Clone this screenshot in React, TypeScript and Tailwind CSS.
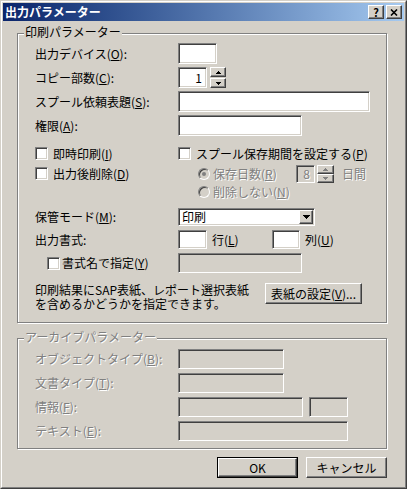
import type { ReactNode } from 'react';

const sunken =
  'border border-t-[#808080] border-l-[#808080] border-b-white border-r-white shadow-[inset_1px_1px_0_#404040,inset_-1px_-1px_0_#d4d0c8]';
const raised =
  'border border-t-white border-l-white border-b-[#404040] border-r-[#404040] shadow-[inset_-1px_-1px_0_#808080] bg-[#d4d0c8]';
const dim = 'text-[#808080] [text-shadow:1px_1px_0_#fff]';
const etched = 'border border-[#808080] shadow-[inset_1px_1px_0_#fff,1px_1px_0_#fff]';

function UpArrow({ color = '#000' }: { color?: string }) {
  return (
    <svg width="5" height="3" viewBox="0 0 5 3" shapeRendering="crispEdges">
      <path d="M2 0h1v1h1v1h1v1H0V2h1V1h1z" fill={color} />
    </svg>
  );
}

function DownArrow({ color = '#000', big = false }: { color?: string; big?: boolean }) {
  if (big) {
    return (
      <svg width="7" height="4" viewBox="0 0 7 4" shapeRendering="crispEdges">
        <path d="M0 0h7v1H6v1H5v1H4v1H3V3H2V2H1V1H0z" fill={color} />
      </svg>
    );
  }
  return (
    <svg width="5" height="3" viewBox="0 0 5 3" shapeRendering="crispEdges">
      <path d="M0 0h5v1H4v1H3v1H2V2H1V1H0z" fill={color} />
    </svg>
  );
}

function Field({ className = '', disabled = false, children }: { className?: string; disabled?: boolean; children?: ReactNode }) {
  return (
    <div className={`${sunken} ${disabled ? 'bg-[#d4d0c8]' : 'bg-white'} ${className}`}>{children}</div>
  );
}

function Check() {
  return <span className={`block shrink-0 w-[13px] h-[13px] bg-white ${sunken}`} />;
}

function Radio({ on = false }: { on?: boolean }) {
  return (
    <span className="flex shrink-0 items-center justify-center w-[12px] h-[12px] rounded-full border border-t-[#808080] border-l-[#808080] border-b-white border-r-white shadow-[inset_1px_1px_0_#404040] bg-[#d4d0c8]">
      {on && <span className="w-[4px] h-[4px] rounded-full bg-[#808080]" />}
    </span>
  );
}

function Spin({ disabled = false, tall = false }: { disabled?: boolean; tall?: boolean }) {
  const c = disabled ? '#808080' : '#000';
  return (
    <div className={`flex flex-col ${tall ? 'w-[17px] h-[18px]' : 'w-[16px] h-[21px] gap-[1px]'}`}>
      <div className={`flex-1 flex items-center justify-center ${raised}`}>
        <UpArrow color={c} />
      </div>
      <div className={`flex-1 flex items-center justify-center ${raised}`}>
        <DownArrow color={c} />
      </div>
    </div>
  );
}

function Row({ label, children, className = '', muted = false }: { label: ReactNode; children: ReactNode; className?: string; muted?: boolean }) {
  return (
    <div className={`flex items-center ${className}`}>
      <span className={`w-[143px] ${muted ? dim : ''}`}>{label}</span>
      {children}
    </div>
  );
}

export default function App() {
  return (
    <div className="w-[407px] h-[489px] bg-[#d4d0c8] border border-t-[#d4d0c8] border-l-[#d4d0c8] border-b-[#404040] border-r-[#404040] text-[12px] leading-[14px] text-black [font-family:'Noto_Sans_CJK_JP',sans-serif]">
      <div className="h-full border border-t-white border-l-white border-b-[#808080] border-r-[#808080] p-[1px] flex flex-col">
        {/* title bar */}
        <div className="h-[18px] flex items-center bg-linear-to-r from-[#0a246a] to-[#a6caf0] pl-[2px] pr-[2px]">
          <span className="font-bold text-white">出力パラメーター</span>
          <div className="ml-auto flex gap-[2px]">
            <div className={`w-[16px] h-[14px] flex items-center justify-center text-[11px] font-bold leading-none ${raised}`}>?</div>
            <div className={`w-[16px] h-[14px] flex items-center justify-center ${raised}`}>
              <svg width="8" height="7" viewBox="0 0 8 7">
                <path d="M1 0.5 L7 6.5 M7 0.5 L1 6.5" stroke="#000" strokeWidth="1.6" />
              </svg>
            </div>
          </div>
        </div>

        {/* print parameters */}
        <div className={`relative mt-[12px] ml-[14px] w-[370px] h-[290px] pt-[9px] pl-[17px] ${etched}`}>
          <span className="absolute left-[6px] top-[-8px] px-[1px] bg-[#d4d0c8] leading-[12px]">印刷パラメーター</span>

          <div className="flex flex-col gap-[3px]">
            <Row label={<>出力デバイス(<u>O</u>):</>} className="h-[21px]">
              <Field className="w-[39px] h-[21px]" />
            </Row>
            <Row label={<>コピー部数(<u>C</u>):</>} className="h-[21px]">
              <Field className="w-[29px] h-[21px] flex items-center justify-end pr-[4px]">1</Field>
              <div className="ml-[3px]">
                <Spin />
              </div>
            </Row>
            <Row label={<>スプール依頼表題(<u>S</u>):</>} className="h-[21px]">
              <Field className="w-[192px] h-[21px]" />
            </Row>
            <Row label={<>権限(<u>A</u>):</>} className="h-[21px]">
              <Field className="w-[124px] h-[21px]" />
            </Row>
          </div>

          <div className="flex mt-[9px]">
            <div className="w-[143px] flex flex-col gap-[3px]">
              <div className="flex items-center h-[17px] gap-[5px]">
                <Check />
                <span>即時印刷(<u>I</u>)</span>
              </div>
              <div className="flex items-center h-[17px] gap-[5px]">
                <Check />
                <span>出力後削除(<u>D</u>)</span>
              </div>
            </div>
            <div className="flex flex-col">
              <div className="flex items-center h-[17px] gap-[5px]">
                <Check />
                <span>スプール保存期間を設定する(<u>P</u>)</span>
              </div>
              <div className="flex items-center h-[18px] mt-[3px] pl-[20px]">
                <Radio on />
                <span className={`ml-[3px] w-[83px] ${dim}`}>保存日数(<u>R</u>)</span>
                <Field disabled className={`w-[19px] h-[18px] flex items-center justify-end pr-[4px] ${dim}`}>8</Field>
                <div className="ml-[2px]">
                  <Spin disabled tall />
                </div>
                <span className={`ml-[8px] ${dim}`}>日間</span>
              </div>
              <div className="flex items-center h-[16px] mt-[1px] pl-[20px]">
                <Radio />
                <span className={`ml-[3px] ${dim}`}>削除しない(<u>N</u>)</span>
              </div>
            </div>
          </div>

          <Row label={<>保管モード(<u>M</u>):</>} className="h-[18px] mt-[8px]">
            <Field className="w-[137px] h-[18px] flex items-center pl-[3px] pr-[1px]">
              <span>印刷</span>
              <div className={`ml-auto w-[14px] h-[14px] flex items-center justify-center ${raised}`}>
                <DownArrow big />
              </div>
            </Field>
          </Row>

          <Row label="出力書式:" className="h-[19px] mt-[4px]">
            <Field className="w-[29px] h-[19px]" />
            <span className="ml-[5px] w-[60px]">
              行(<u>L</u>)
            </span>
            <Field className="w-[28px] h-[19px]" />
            <span className="ml-[5px]">
              列(<u>U</u>)
            </span>
          </Row>

          <div className="flex items-center h-[20px] mt-[4px]">
            <div className="w-[143px] flex items-center pl-[12px] gap-[2px]">
              <Check />
              <span>書式名で指定(<u>Y</u>)</span>
            </div>
            <Field disabled className="w-[124px] h-[20px]" />
          </div>

          <div className="flex items-start mt-[10px]">
            <p className="w-[230px] leading-[14px]">
              印刷結果にSAP表紙、レポート選択表紙
              <br />
              を含めるかどうかを指定できます。
            </p>
            <div className={`w-[97px] h-[21px] flex items-center justify-center ${raised}`}>
              表紙の設定(<u>V</u>)...
            </div>
          </div>
        </div>

        {/* archive parameters */}
        <div className={`relative mt-[15px] ml-[14px] w-[370px] h-[111px] pt-[10px] pl-[17px] ${etched}`}>
          <span className={`absolute left-[6px] top-[-8px] px-[1px] bg-[#d4d0c8] leading-[12px] ${dim}`}>アーカイブパラメーター</span>
          <div className="flex flex-col gap-[4px]">
            <Row muted label={<>オブジェクトタイプ(<u>B</u>):</>} className="h-[20px]">
              <Field disabled className="w-[106px] h-[20px]" />
            </Row>
            <Row muted label={<>文書タイプ(<u>T</u>):</>} className="h-[20px]">
              <Field disabled className="w-[106px] h-[20px]" />
            </Row>
            <Row muted label={<>情報(<u>F</u>):</>} className="h-[20px]">
              <Field disabled className="w-[125px] h-[20px]" />
              <Field disabled className="ml-[6px] w-[39px] h-[20px]" />
            </Row>
            <Row muted label={<>テキスト(<u>E</u>):</>} className="h-[20px]">
              <Field disabled className="w-[170px] h-[20px]" />
            </Row>
          </div>
        </div>

        {/* buttons */}
        <div className="mt-[8px] ml-[14px] w-[370px] flex justify-end gap-[8px]">
          <div className="w-[81px] h-[21px] border border-black">
            <div className={`h-full flex items-center justify-center ${raised}`}>OK</div>
          </div>
          <div className={`w-[81px] h-[21px] flex items-center justify-center ${raised}`}>キャンセル</div>
        </div>
      </div>
    </div>
  );
}
